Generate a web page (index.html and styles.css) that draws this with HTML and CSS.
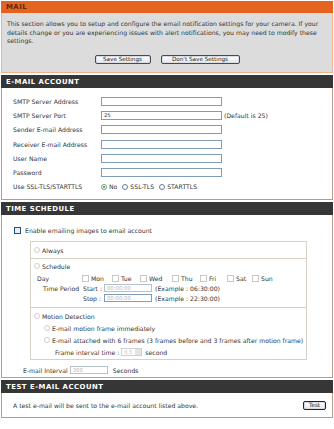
FILE: index.html
```html
<!DOCTYPE html>
<html>
<head>
<meta charset="utf-8">
<title>Mail</title>
<link rel="stylesheet" href="styles.css">
</head>
<body>
<div class="page">
  <section class="panel">
    <div class="hd hd-orange">MAIL</div>
    <div class="bd bd-gray">
      <p class="intro">This section allows you to setup and configure the email notification settings for your camera. If your<br>details change or you are experiencing issues with alert notifications, you may need to modify these<br>settings.</p>
      <div class="btns">
        <button class="btn btn-save">Save Settings</button>
        <button class="btn btn-dont">Don't Save Settings</button>
      </div>
    </div>
  </section>

  <section class="panel">
    <div class="hd hd-dark">E-MAIL ACCOUNT</div>
    <div class="bd bd-white account">
      <div class="frow"><span class="lbl">SMTP Server Address</span><span class="inp wide"></span></div>
      <div class="frow"><span class="lbl">SMTP Server Port</span><span class="inp wide">25</span><span class="note">(Default is 25)</span></div>
      <div class="frow"><span class="lbl">Sender E-mail Address</span><span class="inp wide"></span></div>
      <div class="frow"><span class="lbl">Receiver E-mail Address</span><span class="inp wide"></span></div>
      <div class="frow"><span class="lbl">User Name</span><span class="inp wide"></span></div>
      <div class="frow"><span class="lbl">Password</span><span class="inp wide"></span></div>
      <div class="frow"><span class="lbl">Use SSL-TLS/STARTTLS</span>
        <span class="opt"><span class="radio on"></span>No</span>
        <span class="opt"><span class="radio"></span>SSL-TLS</span>
        <span class="opt"><span class="radio"></span>STARTTLS</span>
      </div>
    </div>
  </section>

  <section class="panel">
    <div class="hd hd-dark">TIME SCHEDULE</div>
    <div class="bd bd-white sched">
      <div class="enable"><span class="chk blue"></span>Enable emailing images to email account</div>
      <div class="inner">
        <div class="cell c-always">
          <div class="line"><span class="radio dis"></span>Always</div>
        </div>
        <div class="cell c-schedule">
          <div class="line"><span class="radio dis"></span>Schedule</div>
          <div class="line days">
            <span class="daylbl">Day</span>
            <span class="day d-mon"><span class="chk dis"></span>Mon</span>
            <span class="day d-tue"><span class="chk dis"></span>Tue</span>
            <span class="day d-wed"><span class="chk dis"></span>Wed</span>
            <span class="day d-thu"><span class="chk dis"></span>Thu</span>
            <span class="day d-fri"><span class="chk dis"></span>Fri</span>
            <span class="day d-sat"><span class="chk dis"></span>Sat</span>
            <span class="day d-sun"><span class="chk dis"></span>Sun</span>
          </div>
          <div class="line period">
            <span class="plbl">Time Period</span>
            <span class="slbl">Start :</span>
            <span class="inp tinp grey">00:00:00</span>
            <span class="ex">(Example : 06:30:00)</span>
          </div>
          <div class="line period">
            <span class="plbl"></span>
            <span class="slbl">Stop :</span>
            <span class="inp tinp grey stop">00:00:00</span>
            <span class="ex">(Example : 22:30:00)</span>
          </div>
        </div>
        <div class="cell c-motion">
          <div class="line"><span class="radio dis"></span>Motion Detection</div>
          <div class="line sub"><span class="radio dis"></span>E-mail motion frame immediately</div>
          <div class="line sub"><span class="radio dis"></span>E-mail attached with 6 frames (3 frames before and 3 frames after motion frame)</div>
          <div class="line frame">Frame interval time : <span class="sel">0.5<span class="arrow"></span></span> second</div>
        </div>
      </div>
      <div class="interval"><span class="ilbl">E-mail Interval</span><span class="inp iinp grey">300</span><span>Seconds</span></div>
    </div>
  </section>

  <section class="panel">
    <div class="hd hd-dark">TEST E-MAIL ACCOUNT</div>
    <div class="bd bd-white test">
      <span>A test e-mail will be sent to the e-mail account listed above.</span>
      <button class="btn btn-test">Test</button>
    </div>
  </section>
</div>
</body>
</html>
```

FILE: styles.css
```css
html, body {
  margin: 0;
  padding: 0;
  background: #ffffff;
}
body {
  font-family: "DejaVu Sans", Verdana, sans-serif;
  font-size: 6.15px;
  color: #333333;
}
.page {
  width: 332px;
  margin: 1px 0 0 1px;
  display: flex;
  flex-direction: column;
  gap: 2px;
}
.panel {
  display: flex;
  flex-direction: column;
}
.hd {
  display: flex;
  align-items: center;
  padding-left: 5px;
  font-weight: bold;
  font-size: 6.9px;
  letter-spacing: 0.5px;
  height: 13px;
}
.hd-orange {
  background: #e3631f;
  color: #5a2a12;
  height: 12px;
}
.hd-dark {
  background: #363636;
  color: #ffffff;
}
.bd-gray {
  background: #dcdcdc;
  border: 1px solid #f1b18b;
  border-top: none;
  height: 60px;
  box-sizing: border-box;
  padding: 7px 5px 0;
}
.intro {
  margin: 0;
  line-height: 8.7px;
  white-space: nowrap;
}
.btns {
  display: flex;
  justify-content: center;
  gap: 10px;
  margin-top: 9px;
}
.btn {
  font-family: inherit;
  font-size: 5.7px;
  color: #222;
  height: 9px;
  padding: 0;
  border: 1px solid #4a4a4a;
  border-radius: 2px;
  background: linear-gradient(#ffffff, #e6e6e6);
  box-shadow: inset 0 0 0 1px #d7dde8;
  line-height: 7px;
}
.btn-save { width: 56px; }
.btn-dont { width: 79px; }

.bd-white {
  background: #ffffff;
  border: 1px solid #b99a8b;
  border-top: none;
}
.account {
  padding: 6px 11px 5px;
}
.frow {
  height: 14.3px;
  display: flex;
  align-items: center;
  white-space: nowrap;
}
.lbl {
  width: 88px;
  flex: none;
}
.inp {
  display: inline-flex;
  align-items: center;
  box-sizing: border-box;
  height: 9px;
  border: 1px solid #7f9db9;
  background: #fff;
  padding-left: 2px;
  font-size: 5.3px;
  flex: none;
}
.inp.wide { width: 121px; }
.inp.grey { color: #b8b8b8; border-color: #b4c0cc; }
.inp.grey.stop { border-color: #7f9db9; }
.note { margin-left: 2px; }
.opt {
  display: inline-flex;
  align-items: center;
  margin-right: 5px;
}
.radio {
  display: inline-block;
  box-sizing: border-box;
  width: 6px;
  height: 6px;
  border-radius: 50%;
  border: 1px solid #5f7f9f;
  background: #fff;
  margin-right: 2px;
  position: relative;
  flex: none;
}
.radio.on {
  border-color: #7a9a7a;
}
.radio.on::after {
  content: "";
  position: absolute;
  left: 1px;
  top: 1px;
  width: 2px;
  height: 2px;
  border-radius: 50%;
  background: #2aa12a;
}
.radio.dis {
  border-color: #cfcfcf;
}
.chk {
  display: inline-block;
  box-sizing: border-box;
  width: 7px;
  height: 7px;
  border: 1px solid #c8c8c8;
  background: #fff;
  margin-right: 2px;
  flex: none;
}
.chk.blue {
  border-color: #1f4f86;
  background: #e8eef7;
}

.sched {
  padding: 10px 0 0;
  height: 163px;
  box-sizing: border-box;
}
.enable {
  height: 10px;
  display: flex;
  align-items: center;
  padding-left: 12px;
}
.enable .chk { margin-right: 4px; }
.inner {
  margin: 6px 0 0 28px;
  width: 277px;
  border: 1px solid #d7d1c5;
  box-sizing: border-box;
}
.cell {
  border-bottom: 1px solid #d7d1c5;
  padding-left: 3px;
}
.cell:last-child { border-bottom: none; }
.line {
  display: flex;
  align-items: center;
  height: 10px;
  white-space: nowrap;
}
.c-always {
  height: 16px;
  display: flex;
  flex-direction: column;
  justify-content: center;
}
.c-schedule {
  padding-top: 2px;
  padding-bottom: 4px;
}
.c-schedule .days { margin-top: 2px; }
.daylbl {
  width: 48px;
  padding-left: 3px;
  box-sizing: border-box;
  flex: none;
}
.day {
  display: inline-flex;
  align-items: center;
  flex: none;
}
.d-mon { width: 30px; }
.d-tue { width: 28px; }
.d-wed { width: 32px; }
.d-thu { width: 28px; }
.d-fri { width: 27px; }
.d-sat { width: 25px; }
.plbl {
  width: 49px;
  padding-left: 9px;
  box-sizing: border-box;
  flex: none;
}
.slbl {
  width: 21px;
  flex: none;
}
.tinp {
  width: 48px;
  height: 8px;
}
.ex { margin-left: 3px; }
.c-motion {
  padding-top: 2px;
  padding-bottom: 1px;
}
.c-motion .line { height: 12px; }
.c-motion .line.sub { padding-left: 10px; }
.c-motion .line.frame { padding-left: 21px; }
.sel {
  display: inline-flex;
  align-items: center;
  justify-content: space-between;
  box-sizing: border-box;
  width: 21px;
  height: 8px;
  margin: 0 3px 0 2px;
  border: 1px solid #cfcfcf;
  padding-left: 2px;
  color: #b8b8b8;
  font-size: 5px;
}
.arrow {
  width: 6px;
  height: 6px;
  background: #e4e4e4;
}
.interval {
  display: flex;
  align-items: center;
  height: 20px;
  padding-left: 21px;
  white-space: nowrap;
}
.ilbl { flex: none; margin-right: 2px; }
.iinp {
  width: 38px;
  height: 8px;
  margin-right: 5px;
}
.test {
  height: 25px;
  box-sizing: border-box;
  display: flex;
  align-items: center;
  justify-content: space-between;
  padding: 0 6px 0 11px;
}
.btn-test {
  width: 23px;
  height: 9px;
  border-color: #222;
}
```
